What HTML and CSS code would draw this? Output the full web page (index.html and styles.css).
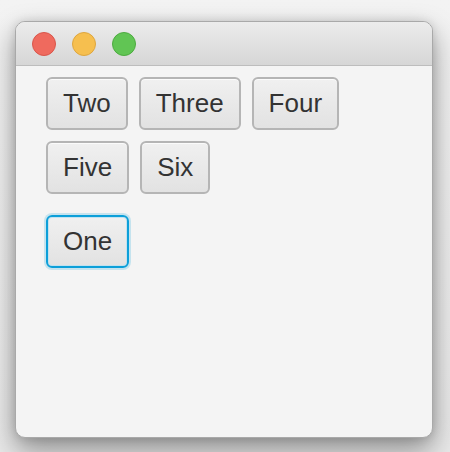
FILE: index.html
```html
<!DOCTYPE html>
<html>
<head>
<meta charset="utf-8">
<link rel="stylesheet" href="styles.css">
</head>
<body>
<div class="window">
  <div class="titlebar">
    <span class="light red"></span>
    <span class="light yellow"></span>
    <span class="light green"></span>
  </div>
  <div class="content">
    <div class="row">
      <button class="btn">Two</button>
      <button class="btn">Three</button>
      <button class="btn">Four</button>
    </div>
    <div class="row">
      <button class="btn">Five</button>
      <button class="btn">Six</button>
    </div>
    <div class="row row-last">
      <button class="btn focused">One</button>
    </div>
  </div>
</div>
</body>
</html>
```
FILE: styles.css
```css
html, body {
  margin: 0;
  padding: 0;
}
body {
  width: 450px;
  height: 452px;
  overflow: hidden;
  background: linear-gradient(#f3f3f3, #e9e9e9);
  font-family: "Liberation Sans", Arial, sans-serif;
}
.window {
  box-sizing: border-box;
  margin: 21px 0 0 15px;
  width: 418px;
  height: 417px;
  background: #f4f4f4;
  border: 1px solid #a9a9a9;
  border-radius: 10px;
  overflow: hidden;
  box-shadow: 0 12px 28px rgba(0, 0, 0, 0.4), 0 0 10px rgba(0, 0, 0, 0.12);
}
.titlebar {
  box-sizing: border-box;
  height: 44px;
  background: linear-gradient(#ececec, #d6d6d6);
  border-bottom: 1px solid #bdbdbd;
  display: flex;
  align-items: center;
  gap: 16px;
  padding-left: 16px;
}
.light {
  box-sizing: border-box;
  width: 24px;
  height: 24px;
  border-radius: 50%;
}
.red { background: #ef6a5e; border: 1px solid #d9564b; }
.yellow { background: #f6bf4f; border: 1px solid #dea63f; }
.green { background: #61c554; border: 1px solid #4dab40; }
.content {
  display: flex;
  flex-direction: column;
  align-items: flex-start;
  gap: 11px;
  padding: 11px 0 0 30px;
}
.row {
  display: flex;
  gap: 11px;
}
.row-last {
  margin-top: 10px;
}
.btn {
  box-sizing: border-box;
  height: 53px;
  padding: 0 15px;
  font-family: "Liberation Sans", Arial, sans-serif;
  font-size: 26px;
  color: #333;
  background: linear-gradient(#f0f0f0, #e2e2e2);
  border: 2px solid #b5b5b5;
  border-radius: 6px;
  box-shadow: inset 0 1px 0 #fbfbfb;
}
.focused {
  border-color: #0c9fd9;
  box-shadow: 0 0 0 2px rgba(12, 159, 217, 0.2), inset 0 0 0 1px rgba(190, 225, 240, 0.9);
}
```
